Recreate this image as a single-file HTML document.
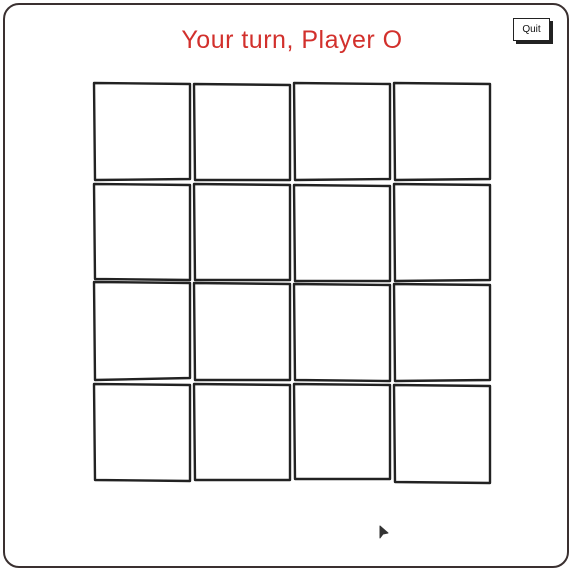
<!DOCTYPE html>
<html><head><meta charset="utf-8"><style>
html,body{margin:0;padding:0;background:#fff;width:572px;height:573px;overflow:hidden}
.frame{position:absolute;left:3px;top:3px;width:562px;height:561px;border:2px solid #3a3030;border-radius:16px}
.title{position:absolute;left:0;width:584px;top:26px;text-align:center;font-family:"Liberation Sans",sans-serif;font-size:25px;color:#d2302c;letter-spacing:0.5px}
.quit{position:absolute;left:513px;top:18px;width:35px;height:21px;border:1.6px solid #222;background:#fff;box-shadow:3px 3px 0 #222;font-family:"Liberation Sans",sans-serif;font-size:10px;text-align:center;line-height:21px;color:#111}
</style></head><body>
<div class="frame"></div>
<div class="title">Your turn, Player O</div>
<div class="quit">Quit</div>
<svg width="572" height="573" style="position:absolute;left:0;top:0" fill="none" stroke="#222" stroke-width="2.4" stroke-linejoin="round">
<path d="M94,83 L190,84 L190,179 L95,180 Z"/>
<path d="M194,84 L290,85 L290,180 L195,180 Z"/>
<path d="M294,83 L390,84 L390,179 L295,180 Z"/>
<path d="M394,83 L490,84 L490,179 L395,180 Z"/>
<path d="M94,184 L190,185 L190,280 L95,279 Z"/>
<path d="M194,184 L290,185 L290,280 L195,280 Z"/>
<path d="M294,185 L390,186 L390,281 L295,281 Z"/>
<path d="M394,184 L490,185 L490,280 L395,281 Z"/>
<path d="M94,282 L190,283 L190,378 L95,380 Z"/>
<path d="M194,283 L290,284 L290,380 L195,380 Z"/>
<path d="M294,284 L390,285 L390,381 L295,380 Z"/>
<path d="M394,284 L490,285 L490,380 L395,381 Z"/>
<path d="M94,384 L190,385 L190,481 L95,480 Z"/>
<path d="M194,384 L290,385 L290,480 L195,480 Z"/>
<path d="M294,384 L390,385 L390,479 L295,479 Z"/>
<path d="M394,385 L490,386 L490,483 L395,482 Z"/>
<path d="M380,526 L380,538 L383,534 L388,533 Z" fill="#333" stroke="#333" stroke-width="1"/>
</svg>
</body></html>
